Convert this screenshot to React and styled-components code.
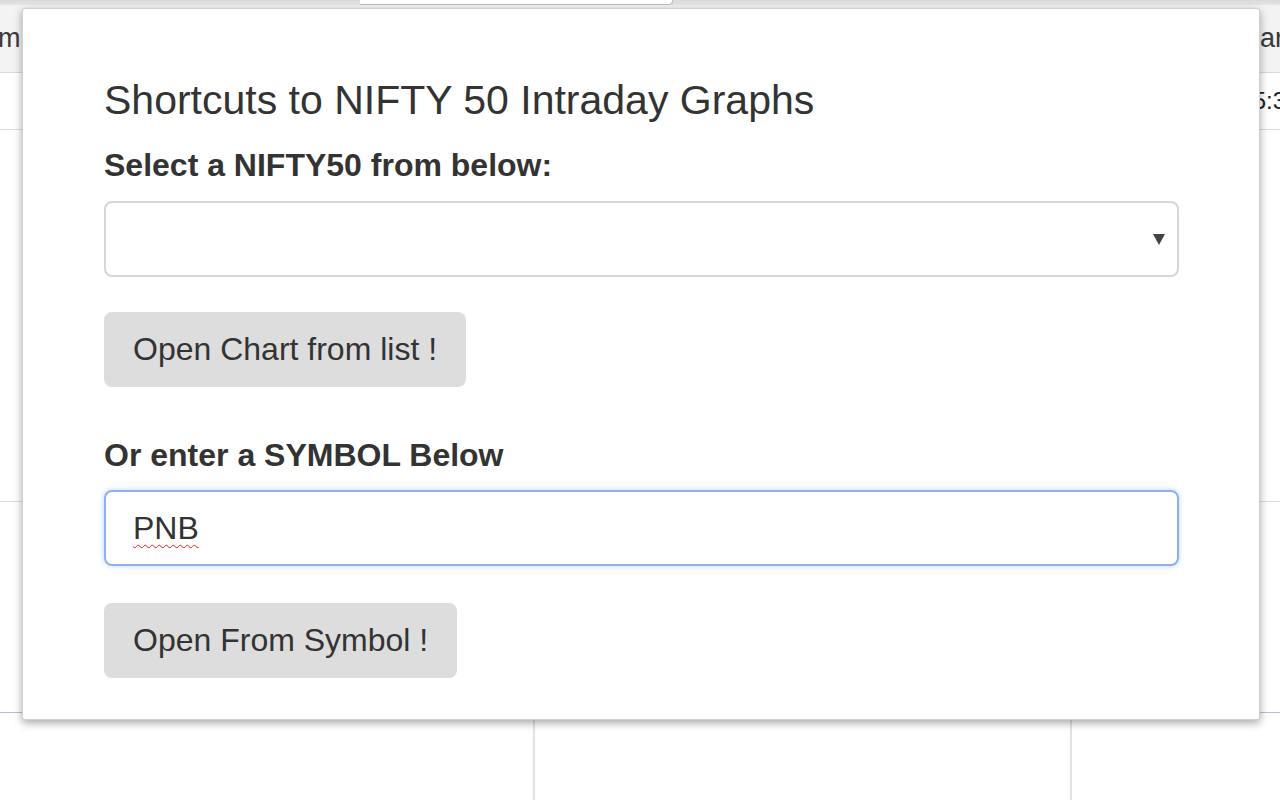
import React from "react";
import styled, { createGlobalStyle } from "styled-components";

const Global = createGlobalStyle`
  html, body {
    margin: 0;
    padding: 0;
    background: #fff;
    overflow: hidden;
  }
  body {
    font-family: "Liberation Sans", Arial, sans-serif;
    color: #333;
  }
`;

const Page = styled.div`
  position: relative;
  width: 1280px;
  height: 800px;
  overflow: hidden;
  display: flex;
  flex-direction: column;
`;

const Strip = styled.div`
  height: 5px;
  background: linear-gradient(#d9d9d9, #e6e6e6);
  display: flex;
`;

const Tab = styled.div`
  margin-left: 360px;
  width: 312px;
  height: 4px;
  background: #fff;
  border-bottom: 1px solid #bdbdbd;
  border-right: 1px solid #bdbdbd;
  border-bottom-right-radius: 4px;
`;

const Toolbar = styled.div`
  height: 67px;
  background: #f3f3f3;
  border-bottom: 1px solid #dadada;
  display: flex;
  align-items: center;
  justify-content: space-between;
  font-size: 27px;
  color: #3a3a3a;
  white-space: nowrap;
`;

const Cut = styled.span`
  margin-left: ${({ $left }) => $left || "0"};
  margin-right: ${({ $right }) => $right || "0"};
`;

const Mark = styled.span`
  display: inline-block;
  width: 4px;
  height: 26px;
  margin-left: 1px;
  vertical-align: middle;
  background: #f2cb2e;
`;

const Row = styled.div`
  height: ${({ $h }) => $h}px;
  border-bottom: 1px solid ${({ $line }) => $line || "#dcdcdc"};
  display: flex;
  align-items: center;
  justify-content: flex-end;
  font-size: 24px;
  color: #222;
  white-space: nowrap;
`;

const Cols = styled.div`
  flex: 1;
  display: grid;
  grid-template-columns: 533px 537px 1fr;
`;

const Col = styled.div`
  border-left: ${({ $first }) => ($first ? "none" : "2px solid #e2e2e2")};
`;

const Popup = styled.div`
  position: absolute;
  top: 8px;
  left: 22px;
  width: 1238px;
  height: 712px;
  box-sizing: border-box;
  padding: 0 80px 0 81px;
  background: #fff;
  border: 1px solid #d0d0d0;
  border-radius: 3px;
  box-shadow: 0 3px 8px rgba(0, 0, 0, 0.35);
  display: flex;
  flex-direction: column;
  align-items: flex-start;
`;

const Title = styled.h3`
  margin: 68px 0 0;
  font-size: 41px;
  line-height: 46px;
  font-weight: 400;
  color: #333;
`;

const Label = styled.label`
  display: block;
  margin-top: ${({ $top }) => $top}px;
  font-size: 32px;
  line-height: 36px;
  font-weight: 700;
  color: #333;
`;

const SelectWrap = styled.div`
  position: relative;
  align-self: stretch;
  margin-top: 18px;
`;

const Select = styled.select`
  display: block;
  width: 100%;
  height: 76px;
  box-sizing: border-box;
  appearance: none;
  background: #fff;
  border: 2px solid #d6d6d6;
  border-radius: 8px;
  font: inherit;
  font-size: 32px;
  color: #333;
  padding: 0 28px;
`;

const Arrow = styled.svg`
  position: absolute;
  right: 14px;
  top: 33px;
  pointer-events: none;
`;

const Button = styled.button`
  margin-top: ${({ $top }) => $top}px;
  height: 75px;
  padding: 0 29px;
  border: none;
  border-radius: 8px;
  background: #dddddd;
  font-family: "Liberation Sans", Arial, sans-serif;
  font-size: 32px;
  color: #333;
  cursor: pointer;
`;

const Field = styled.div`
  align-self: stretch;
  margin-top: 17px;
  height: 76px;
  box-sizing: border-box;
  border: 2px solid #8db0ee;
  border-radius: 8px;
  box-shadow: 0 0 5px rgba(102, 150, 235, 0.45);
  display: flex;
  align-items: center;
  padding: 0 27px;
  font-size: 32px;
  color: #333;
`;

const Typed = styled.span`
  text-decoration: underline wavy #e02020;
  text-decoration-thickness: 1px;
  text-underline-offset: 5px;
`;

export default function App() {
  return (
    <>
      <Global />
      <Page>
        <Strip>
          <Tab />
        </Strip>
        <Toolbar>
          <Cut $left="-2px">m</Cut>
          <Cut $right="-9px">
            ar<Mark />
          </Cut>
        </Toolbar>
        <Row $h={56}>
          <Cut $right="-6px">5:3</Cut>
        </Row>
        <Row $h={371} />
        <Row $h={210} $line="#b6bed0" />
        <Cols>
          <Col $first />
          <Col />
          <Col />
        </Cols>

        <Popup>
          <Title>Shortcuts to NIFTY 50 Intraday Graphs</Title>
          <Label $top={24}>Select a NIFTY50 from below:</Label>
          <SelectWrap>
            <Select defaultValue="">
              <option value=""></option>
            </Select>
            <Arrow width="12" height="11" viewBox="0 0 12 11">
              <polygon points="0,0 12,0 6,11" fill="#444" />
            </Arrow>
          </SelectWrap>
          <Button $top={35}>Open Chart from list !</Button>
          <Label $top={50}>Or enter a SYMBOL Below</Label>
          <Field>
            <Typed>PNB</Typed>
          </Field>
          <Button $top={37}>Open From Symbol !</Button>
        </Popup>
      </Page>
    </>
  );
}
